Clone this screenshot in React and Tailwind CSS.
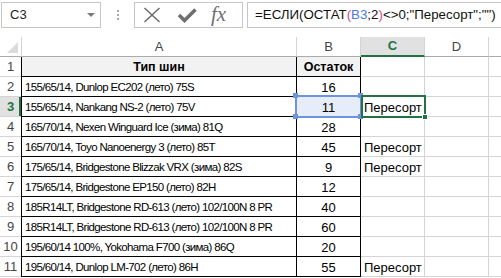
import React from 'react'

const rows = [
  ['155/65/14, Dunlop EC202 (лето) 75S', '16', ''],
  ['155/65/14, Nankang NS-2 (лето) 75V', '11', 'Пересорт'],
  ['165/70/14, Nexen Winguard Ice (зима) 81Q', '28', ''],
  ['165/70/14, Toyo Nanoenergy 3 (лето) 85T', '45', 'Пересорт'],
  ['175/65/14, Bridgestone Blizzak VRX (зима) 82S', '9', 'Пересорт'],
  ['175/65/14, Bridgestone EP150 (лето) 82H', '12', ''],
  ['185R14LT, Bridgestone RD-613 (лето) 102/100N 8 PR', '40', ''],
  ['185R14LT, Bridgestone RD-613 (лето) 102/100N 8 PR', '60', ''],
  ['195/60/14 100%, Yokohama F700 (зима) 86Q', '20', ''],
  ['195/60/14, Dunlop LM-702 (лето) 86H', '55', 'Пересорт'],
]

function FormulaBar() {
  return (
    <div className="h-[37px] flex items-start pt-[2px] pl-[1px]">
      {/* Name box */}
      <div className="w-[100px] h-[26px] border border-[#c6c6c6] flex items-center justify-between pl-[8px] pr-[5px] text-[13px] text-[#222]">
        <span>C3</span>
        <span className="w-0 h-0 border-x-[4px] border-x-transparent border-t-[4px] border-t-[#7a7a7a]" />
      </div>

      {/* Grip dots */}
      <div className="w-[33px] h-[26px] flex flex-col items-center justify-center gap-[2px]">
        <span className="w-[2px] h-[2px] bg-[#a6a6a6]" />
        <span className="w-[2px] h-[2px] bg-[#a6a6a6]" />
        <span className="w-[2px] h-[2px] bg-[#a6a6a6]" />
      </div>

      {/* Cancel / Enter / Insert function */}
      <div className="w-[109px] h-[26px] border border-[#c6c6c6] flex items-center pl-[8px]">
        <svg width="18" height="16" viewBox="0 0 18 16" className="mr-[16px]">
          <path d="M1.5 1 L16.5 15 M16.5 1 L1.5 15" stroke="#6f6f6f" strokeWidth="1.6" fill="none" />
        </svg>
        <svg width="20" height="16" viewBox="0 0 20 16" className="mr-[14px]">
          <path d="M2 8 L7.5 13.5 L18.5 2.5" stroke="#6f6f6f" strokeWidth="3.6" fill="none" />
        </svg>
        <span className="font-['Liberation_Serif',serif] italic text-[21px] leading-none text-[#707070] -mt-[2px]">fx</span>
      </div>

      {/* Formula */}
      <div className="ml-[4px] flex-1 h-[26px] border border-r-0 border-[#c6c6c6] flex items-center pl-[7px] text-[13.3px] text-[#111] whitespace-nowrap">
        =ЕСЛИ(ОСТАТ<span className="text-[#e0457b]">(</span>
        <span className="text-[#4e7ad8]">B3</span>;2<span className="text-[#e0457b]">)</span>
        {'<>0;"Пересорт";"")'}
      </div>
    </div>
  )
}

function HeaderRow() {
  return (
    <div className="flex h-[20px] text-[13px] text-[#444]">
      <div className="relative w-[22px] border-r border-b border-r-[#d4d4d4] border-b-[#ababab]">
        <span className="absolute right-[3px] bottom-[3px] w-0 h-0 border-l-[11px] border-l-transparent border-b-[11px] border-b-[#dcdcdc]" />
      </div>
      <div className="w-[275px] border-r border-b border-r-[#d4d4d4] border-b-[#ababab] flex items-center justify-center">A</div>
      <div className="w-[64px] border-r border-b border-r-[#d4d4d4] border-b-[#ababab] flex items-center justify-center">B</div>
      <div className="w-[64px] border-r border-[#d4d4d4] border-b-2 border-b-[#217346] bg-[#e1e1e1] flex items-center justify-center font-bold text-[#217346]">C</div>
      <div className="w-[64px] border-r border-b border-r-[#d4d4d4] border-b-[#ababab] flex items-center justify-center">D</div>
      <div className="flex-1 border-b border-b-[#ababab]" />
    </div>
  )
}

function TitleRow() {
  return (
    <div className="flex h-[20px]">
      <div className="w-[21px] border-b border-[#d4d4d4] flex items-center justify-center text-[13px] text-[#444]">1</div>
      <div className="w-[276px] border-x border-b border-black bg-[#f2f2f2] flex items-center justify-center font-bold text-[12.5px] text-black pt-[2px]">Тип шин</div>
      <div className="w-[64px] border-r border-b border-black bg-[#f2f2f2] flex items-center justify-center font-bold text-[12.5px] text-black pt-[2px]">Остаток</div>
      <div className="w-[64px] border-r border-b border-[#d4d4d4]" />
      <div className="w-[64px] border-r border-b border-[#d4d4d4]" />
      <div className="flex-1 border-b border-[#d4d4d4]" />
    </div>
  )
}

function DataRow({ n, name, qty, flag }) {
  const active = n === 3
  return (
    <div className="flex h-[20px]">
      <div
        className={
          active
            ? 'w-[21px] border-b border-[#d4d4d4] bg-[#e1e1e1] flex items-center justify-center text-[13px] font-bold text-[#217346]'
            : 'w-[21px] border-b border-[#d4d4d4] flex items-center justify-center text-[13px] text-[#444]'
        }
      >
        {n}
      </div>
      <div className="w-[276px] border-x border-b border-black flex items-center pl-[3px] pt-[2px] text-[11.5px] tracking-[-0.65px] text-black whitespace-nowrap overflow-hidden">
        {name}
      </div>
      <div
        className={
          active
            ? 'w-[64px] border-r border-b border-black bg-[#e6ecf8] flex items-center justify-center pt-[2px] text-[13px] text-black'
            : 'w-[64px] border-r border-b border-black flex items-center justify-center pt-[2px] text-[13px] text-black'
        }
      >
        {qty}
      </div>
      <div className="w-[64px] border-r border-b border-[#d4d4d4] flex items-center pl-[3px] pt-[2px] text-[13px] text-black whitespace-nowrap">
        {flag}
      </div>
      <div className="w-[64px] border-r border-b border-[#d4d4d4]" />
      <div className="flex-1 border-b border-[#d4d4d4]" />
    </div>
  )
}

export default function App() {
  return (
    <div className="w-[501px] h-[278px] overflow-hidden bg-white font-['Liberation_Sans',Arial,sans-serif]">
      <FormulaBar />

      <div className="relative">
        <HeaderRow />
        <TitleRow />
        {rows.map((r, i) => (
          <DataRow key={i} n={i + 2} name={r[0]} qty={r[1]} flag={r[2]} />
        ))}

        {/* Row 3 header marker */}
        <div className="absolute left-[19px] top-[60px] w-[2px] h-[19px] bg-[#217346]" />

        {/* Referenced range B3 */}
        <div className="absolute left-[295px] top-[58px] w-[67px] h-[23px] border-2 border-[#6b93e0]" />
        <div className="absolute left-[293px] top-[56px] w-[5px] h-[5px] bg-[#6b93e0]" />
        <div className="absolute left-[358px] top-[56px] w-[5px] h-[5px] bg-[#6b93e0]" />
        <div className="absolute left-[293px] top-[77px] w-[5px] h-[5px] bg-[#6b93e0]" />
        <div className="absolute left-[358px] top-[77px] w-[5px] h-[5px] bg-[#6b93e0]" />

        {/* Active cell C3 */}
        <div className="absolute left-[361px] top-[58px] w-[65px] h-[23px] border-2 border-[#217346]" />
        <div className="absolute left-[422px] top-[77px] w-[6px] h-[6px] bg-[#217346] border border-white" />
      </div>
    </div>
  )
}
